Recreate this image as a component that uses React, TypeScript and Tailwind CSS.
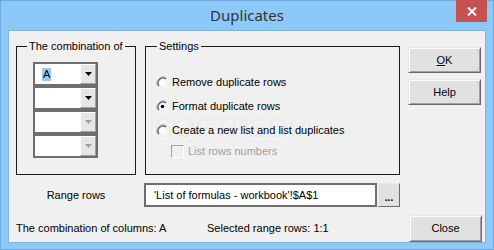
import React from 'react';

const font = { fontFamily: '"Liberation Sans", Arial, sans-serif' };

function Combo({ value, enabled }: { value?: string; enabled: boolean }) {
  return (
    <div className="flex h-[24px] w-[65px] border-2 border-[#6e6e6e] bg-white">
      <div className="flex flex-1 items-center pl-[7px]">
        {value && <span className="bg-[#99c9ef] px-[1px] leading-[13px] text-black">{value}</span>}
      </div>
      <div className="flex w-[16px] items-center justify-center border border-t-white border-l-white border-r-[#a0a0a0] border-b-[#a0a0a0] bg-[#e6e6e6]">
        <svg width="7" height="4" viewBox="0 0 7 4">
          <path d="M0 0h7L3.5 4z" fill={enabled ? '#000' : '#a0a0a0'} />
        </svg>
      </div>
    </div>
  );
}

function Radio({ checked, label }: { checked?: boolean; label: string }) {
  return (
    <div className="flex h-[24px] items-center gap-[3px]">
      <svg width="13" height="13" viewBox="0 0 13 13">
        <circle cx="6.5" cy="6.5" r="6" fill="#fff" />
        <path d="M2.3 10.7A6 6 0 0 1 10.7 2.3" stroke="#8a8a8a" strokeWidth="1" fill="none" />
        <path d="M3 10A5 5 0 0 1 10 3" stroke="#3c3c3c" strokeWidth="1" fill="none" />
        <path d="M10.7 2.3A6 6 0 0 1 2.3 10.7" stroke="#fff" strokeWidth="1" fill="none" />
        <path d="M10 3A5 5 0 0 1 3 10" stroke="#e0e0e0" strokeWidth="1" fill="none" />
        {checked && <circle cx="6.5" cy="6.5" r="1.8" fill="#000" />}
      </svg>
      <span>{label}</span>
    </div>
  );
}

function Btn({ children, className = '' }: { children: React.ReactNode; className?: string }) {
  return (
    <div
      className={`flex h-[26px] w-[73px] items-center justify-center border border-t-[#e8e8e8] border-l-[#e8e8e8] border-r-[#696969] border-b-[#696969] bg-[#e1e1e1] shadow-[inset_1px_1px_0_#fff,inset_-1px_-1px_0_#a0a0a0] ${className}`}
    >
      {children}
    </div>
  );
}

export default function App() {
  return (
    <div
      className="flex h-[250px] w-[494px] flex-col border border-[#6fa9df] bg-[#8cc8f8] text-[11px] text-black"
      style={font}
    >
      {/* Title bar */}
      <div className="relative flex h-[29px] items-center justify-center">
        <span
          className="text-[15px] text-[#333]"
          style={{ fontFamily: '"Noto Sans", "Open Sans", sans-serif' }}
        >
          Duplicates
        </span>
        <div className="absolute right-[6px] top-[-1px] flex h-[22px] w-[31px] items-center justify-center bg-[#c75050]">
          <svg width="10" height="9" viewBox="0 0 10 9">
            <path d="M1 0.5l8 8M9 0.5l-8 8" stroke="#fff" strokeWidth="2" />
          </svg>
        </div>
      </div>

      {/* Client area */}
      <div className="mx-[7px] h-[213px] w-[478px] border border-[#7fb5e6] bg-[#f0f0f0] pl-[7px] pt-[15px]">
        <div className="flex">
          {/* Combination group */}
          <div className="relative h-[129px] w-[120px] border border-[#1a1a1a] pl-[16px] pt-[15px]">
            <span className="absolute left-[10px] top-[-8px] bg-[#f0f0f0] px-[2px] leading-[14px]">
              The combination of
            </span>
            <div className="flex flex-col">
              <Combo value="A" enabled />
              <Combo enabled />
              <Combo enabled={false} />
              <Combo enabled={false} />
            </div>
          </div>

          {/* Settings group */}
          <div className="relative ml-[9px] h-[129px] w-[255px] border border-[#1a1a1a] pl-[10px] pt-[23px]">
            <span className="absolute left-[11px] top-[-8px] bg-[#f0f0f0] px-[2px] leading-[14px]">
              Settings
            </span>
            <span className="pointer-events-none absolute left-[8px] top-[58px] select-none text-[30px] font-bold tracking-[-1px] text-[#ececec] [text-shadow:1px_1px_0_#fafafa]">
              SOFTPEDIA
            </span>
            <div className="relative flex flex-col">
              <Radio label="Remove duplicate rows" />
              <Radio checked label="Format duplicate rows" />
              <Radio label="Create a new list and list duplicates" />
              <div className="flex h-[18px] items-center gap-[4px] pl-[15px] text-[#a0a0a0]">
                <div className="h-[13px] w-[13px] border border-t-[#a0a0a0] border-l-[#a0a0a0] border-r-white border-b-white bg-[#f0f0f0]" />
                <span>List rows numbers</span>
              </div>
            </div>
          </div>

          {/* Right buttons */}
          <div className="ml-[8px] mt-[1px] flex flex-col gap-[6px]">
            <Btn>
              <span>
                <span className="underline">O</span>K
              </span>
            </Btn>
            <Btn className="h-[25px]">Help</Btn>
          </div>
        </div>

        {/* Range row */}
        <div className="mt-[8px] flex items-center">
          <div className="w-[120px] text-center">Range rows</div>
          <div className="ml-[8px] flex h-[24px] w-[233px] items-center border-2 border-[#6e6e6e] bg-white pl-[8px]">
            'List of formulas - workbook'!$A$1
          </div>
          <div className="ml-[1px] flex h-[24px] w-[22px] items-end justify-center border border-t-[#e8e8e8] border-l-[#e8e8e8] border-r-[#696969] border-b-[#696969] bg-[#e1e1e1] pb-[5px] text-[10px] font-bold leading-[6px]">
            ...
          </div>
        </div>

        {/* Bottom row */}
        <div className="mt-[8px] flex items-center">
          <div className="w-[191px]">The combination of columns: A</div>
          <div className="w-[202px]">Selected range rows: 1:1</div>
          <Btn className="h-[27px]">Close</Btn>
        </div>
      </div>
    </div>
  );
}
